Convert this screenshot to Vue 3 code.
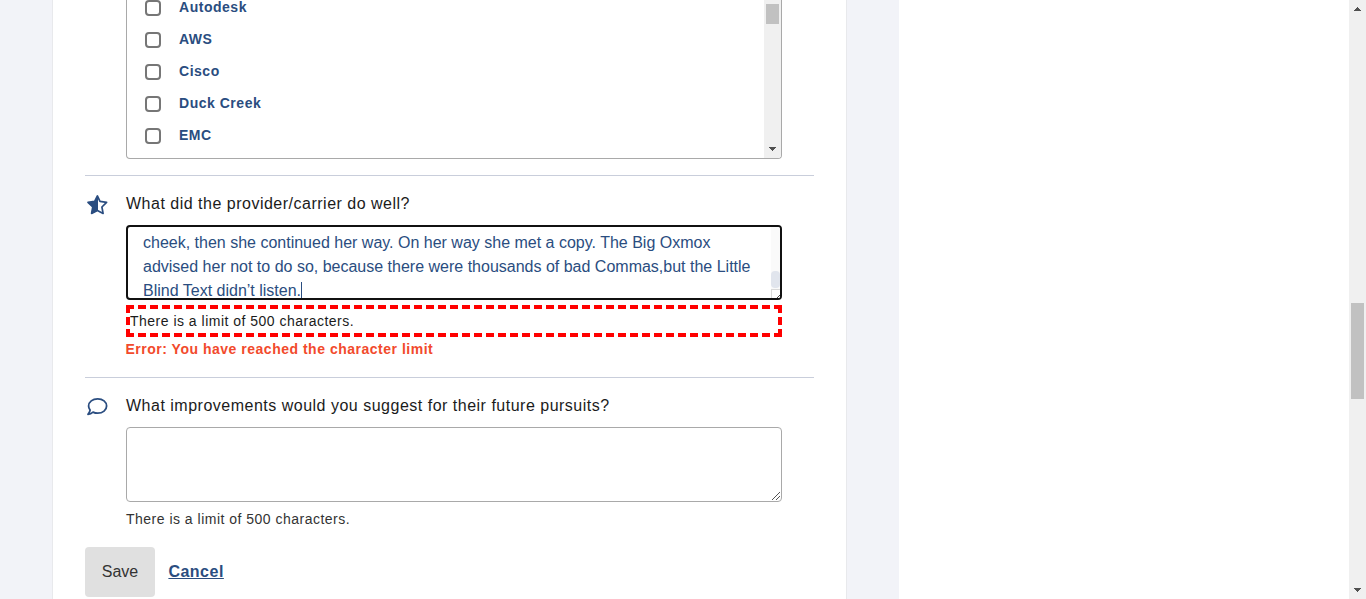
<script setup>
const providers = ['Autodesk', 'AWS', 'Cisco', 'Duck Creek', 'EMC']
const answer = ['cheek, then she continued her way. On her way she met a copy. The Big Oxmox', 'advised her not to do so, because there were thousands of bad Commas,but the Little', 'Blind Text didn’t listen.']
</script>

<template>
  <div class="page">
    <div class="backdrop">
      <main class="card">
        <div class="list">
          <ul>
            <li v-for="p in providers" :key="p"><span class="check"></span>{{ p }}</li>
          </ul>
          <div class="track inner">
            <div class="thumb"></div>
            <svg class="arrow" width="7" height="4" shape-rendering="crispEdges"><path d="M0 0h7v1H0zM1 1h5v1H1zM2 2h3v1H2zM3 3h1v1H3z" fill="#505050" /></svg>
          </div>
        </div>

        <section class="question first">
          <svg class="icon" width="22" height="22" viewBox="0 0 22 22">
            <path d="M11.4 1.9 14 7.4 20.6 8.4 15.9 13 17.1 19.4 11.4 16.4 5.6 19.4 6.8 13 2 8.4 8.7 7.4Z" fill="none" stroke="#2a4d80" stroke-width="1.7" stroke-linejoin="round" />
            <path d="M12 1.2V16.5L5.4 19.8 6.5 13 1.8 8.4 8.4 7.5Z" fill="#2a4d80" />
          </svg>
          <div class="field">
            <h3>What did the provider/carrier do well?</h3>
            <div class="area focused">
              <div class="lines">
                <div v-for="(line, i) in answer" :key="i">{{ line }}<span v-if="i === 2" class="caret"></span></div>
              </div>
              <div class="mini-track">
                <div class="mini-thumb"></div>
                <div class="corner"><svg width="9" height="9" shape-rendering="crispEdges"><path d="M4 8h1v1H4zM5 7h1v1H5zM6 6h1v1H6zM7 5h1v1H7zM8 4h1v1H8zM7 8h1v1H7zM8 7h1v1H8z" fill="#444" /></svg></div>
              </div>
            </div>
            <div class="hint flagged">There is a limit of 500 characters.</div>
            <div class="error">Error: You have reached the character limit</div>
          </div>
        </section>

        <section class="question second">
          <svg class="icon" width="22" height="22" viewBox="0 0 22 22">
            <path d="M11.7 2.8C16.8 2.8 20.6 6 20.6 10S16.8 17.2 11.7 17.2C10 17.2 8.4 16.8 7 16.1 5.6 17.4 3.9 18.2 2 18.3 3 17.1 3.9 15.6 4.1 14.1 3.1 12.9 2.6 11.5 2.6 10 2.6 6 6.6 2.8 11.7 2.8Z" fill="none" stroke="#2a4d80" stroke-width="1.8" stroke-linejoin="round" />
          </svg>
          <div class="field">
            <h3>What improvements would you suggest for their future pursuits?</h3>
            <div class="area">
              <svg class="grip" width="8" height="8" shape-rendering="crispEdges"><path d="M0 7h1v1H0zM1 6h1v1H1zM2 5h1v1H2zM3 4h1v1H3zM4 3h1v1H4zM5 2h1v1H5zM6 1h1v1H6zM7 0h1v1H7zM4 7h1v1H4zM5 6h1v1H5zM6 5h1v1H6zM7 4h1v1H7z" fill="#555" /></svg>
            </div>
            <div class="hint">There is a limit of 500 characters.</div>
          </div>
        </section>

        <div class="actions"><button>Save</button><a>Cancel</a></div>
      </main>
    </div>
    <div class="track outer">
      <svg width="7" height="4" shape-rendering="crispEdges"><path d="M3 0h1v1H3zM2 1h3v1H2zM1 2h5v1H1zM0 3h7v1H0z" fill="#505050" /></svg>
      <div class="thumb"></div>
      <svg class="arrow" width="7" height="4" shape-rendering="crispEdges"><path d="M0 0h7v1H0zM1 1h5v1H1zM2 2h3v1H2zM3 3h1v1H3z" fill="#505050" /></svg>
    </div>
  </div>
</template>

<style>
html, body { overflow: hidden; background: #fff; }
</style>
<style scoped>
* { box-sizing: border-box; }
.page { display: flex; justify-content: space-between; height: 599px; overflow: hidden; font-family: "Liberation Sans", Arial, sans-serif; font-size: 16px; color: #1b1b1b; }
.backdrop { width: 899px; padding-left: 52px; background: #f2f3f8; }
.card { width: 795px; height: 599px; padding: 0 32px; background: #fff; border: solid #e8e9ec; border-width: 0 1px; }
.list { display: flex; justify-content: space-between; height: 159px; margin: 0 32px 0 41px; border: 1px solid #a9a9a9; border-top: 0; border-radius: 0 0 4px 4px; overflow: hidden; }
ul { list-style: none; margin: -9px 0 0; padding: 0 0 0 18px; }
li { display: flex; align-items: center; height: 32px; font-size: 14px; font-weight: 700; letter-spacing: .52px; color: #2a4d80; padding-bottom: 1px; }
.check { width: 16px; height: 16px; margin: 2px 18px 0 0; border: 2px solid #767676; border-radius: 4px; }
.track { display: flex; flex-direction: column; align-items: center; width: 17px; background: #f0f0f0; }
.thumb { width: 13px; background: #c1c1c1; }
.inner { padding: 4px 0 7px; }
.inner .thumb { height: 20px; }
.arrow { margin-top: auto; }
.outer { height: 599px; padding: 7px 0; }
.outer .thumb { height: 96px; margin-top: 292px; }
.question { display: flex; border-top: 1px solid #c9cedb; }
.first { height: 202px; margin-top: 16px; }
.second { height: 170px; }
.icon { flex: none; width: 22px; height: 22px; margin: 18px 18px 0 1px; }
.field { width: 656px; }
h3 { margin: 18px 0 11px; height: 20px; font-size: 16px; font-weight: 400; line-height: 20px; letter-spacing: .5px; white-space: nowrap; }
.area { display: flex; justify-content: flex-end; align-items: flex-end; height: 75px; border: 1px solid #a9a9a9; border-radius: 4px; padding: 1px; overflow: hidden; }
.focused { justify-content: space-between; align-items: stretch; border: 2px solid #111; padding: 0; color: #2a4d80; }
.lines { padding: 4px 0 0 15px; line-height: 24px; white-space: nowrap; }
.caret { display: inline-block; width: 1px; height: 18px; vertical-align: -4px; background: #2a4d80; }
.mini-track { width: 9px; background: #fafafa; }
.mini-thumb { height: 17px; margin-top: 44px; border-radius: 4px; background: #e1e5ed; }
.corner { height: 10px; border: solid #d9d9d9; border-width: 1px 0 0 1px; margin-top: 1px; background: #fff; }
.corner svg { display: block; }
.hint { height: 32px; margin-top: 1px; font-size: 14px; line-height: 32px; letter-spacing: .49px; }
.second .hint { color: #333; }
.flagged { margin-top: 5px; border: 4px dashed #f00; line-height: 24px; }
.error { margin-left: -.5px; font-size: 14px; line-height: 24px; font-weight: 700; letter-spacing: .51px; color: #f24a2c; }
.actions { display: flex; align-items: center; gap: 13.4px; }
button { width: 70px; height: 50px; padding: 0; border: 0; border-radius: 4px; background: #e0e0e0; color: #333; font: 16px "Liberation Sans", Arial, sans-serif; }
a { font-weight: 700; letter-spacing: .5px; text-decoration: underline; color: #2a4d80; }
</style>
